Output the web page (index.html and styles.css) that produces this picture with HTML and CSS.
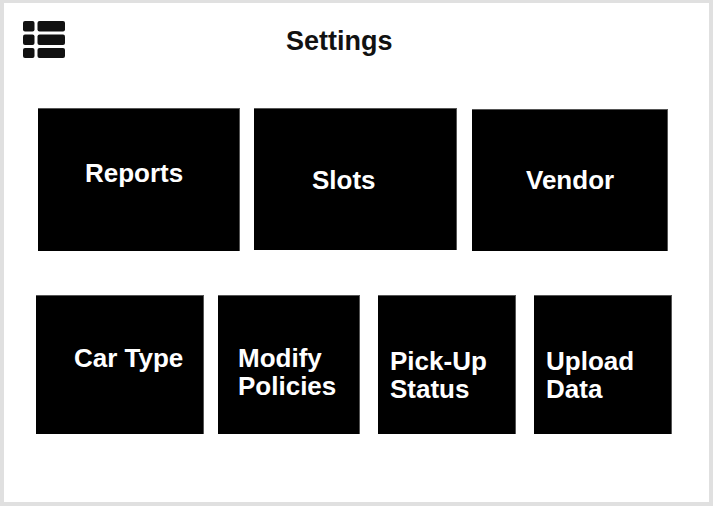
FILE: index.html
```html
<!DOCTYPE html>
<html lang="en">
<head>
  <meta charset="UTF-8">
  <meta name="viewport" content="width=device-width, initial-scale=1.0">
  <title>Settings</title>
  <link rel="stylesheet" href="styles.css">
</head>
<body>
  <div class="screen">
    <div class="header">
      <svg class="menu-icon" width="42" height="37" viewBox="0 0 42 37">
        <rect x="0" y="0" width="11.5" height="10.5" rx="2" />
        <rect x="14.5" y="0" width="27.5" height="10.5" rx="2" />
        <rect x="0" y="13.5" width="11.5" height="10.5" rx="2" />
        <rect x="14.5" y="13.5" width="27.5" height="10.5" rx="2" />
        <rect x="0" y="27" width="11.5" height="10" rx="2" />
        <rect x="14.5" y="27" width="27.5" height="10" rx="2" />
      </svg>
      <h1>Settings</h1>
    </div>

    <div class="row row-top">
      <div class="tile tile-reports">Reports</div>
      <div class="tile tile-slots">Slots</div>
      <div class="tile tile-vendor">Vendor</div>
    </div>

    <div class="row row-bottom">
      <div class="tile tile-car">Car Type</div>
      <div class="tile tile-policies">Modify<br>Policies</div>
      <div class="tile tile-pickup">Pick-Up<br>Status</div>
      <div class="tile tile-upload">Upload<br>Data</div>
    </div>
  </div>
</body>
</html>
```

FILE: styles.css
```css
body {
  margin: 0;
  padding: 3px 4px 4px 4px;
  background: #e0e0e0;
  font-family: 'Liberation Sans', Arial, sans-serif;
}

.screen {
  background: #fff;
  height: 499px;
  width: 705px;
}

.header {
  display: flex;
  align-items: flex-start;
  height: 105px;
  padding: 18px 0 0 19px;
  box-sizing: border-box;
}

.menu-icon {
  fill: #111;
  display: block;
}

.header h1 {
  margin: 5px 0 0 221px;
  font-size: 27px;
  line-height: 30px;
  font-weight: 700;
  color: #111;
}

.row {
  display: flex;
  align-items: flex-start;
}

.row-top {
  gap: 14px;
  padding-left: 34px;
}

.row-bottom {
  margin-top: 44px;
  padding-left: 32px;
}

.tile {
  background: #000;
  color: #fff;
  font-size: 26px;
  font-weight: 700;
  line-height: 28px;
  box-sizing: border-box;
  border-top: 1px solid #555;
  border-right: 1px solid #555;
}

/* top row */
.tile-reports {
  width: 202px;
  height: 143px;
  padding: 50px 0 0 47px;
}

.tile-slots {
  width: 203px;
  height: 142px;
  padding: 57px 0 0 58px;
}

.tile-vendor {
  width: 196px;
  height: 142px;
  margin-left: 1px;
  margin-top: 1px;
  padding: 56px 0 0 54px;
}

/* bottom row */
.row-bottom .tile {
  height: 139px;
}

.tile-car {
  width: 168px;
  padding: 48px 0 0 38px;
}

.tile-policies {
  width: 142px;
  margin-left: 14px;
  padding: 48px 0 0 20px;
}

.tile-pickup {
  width: 138px;
  margin-left: 18px;
  padding: 51px 0 0 12px;
}

.tile-upload {
  width: 138px;
  margin-left: 18px;
  padding: 51px 0 0 12px;
}
```
